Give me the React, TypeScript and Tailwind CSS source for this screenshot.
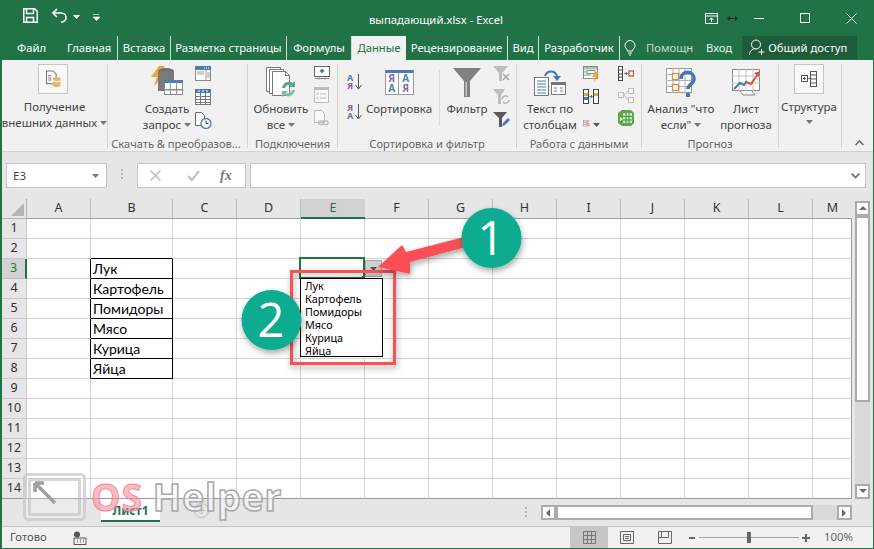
import React from 'react';

const UI = { fontFamily: '"Noto Sans", "Open Sans", sans-serif' };
const CELL = { fontFamily: 'Lato, "Noto Sans", sans-serif' };

const BLUE = '#4a7db5';
const LIGHT = '#bdbdbd';

const Caret = ({ color = '#777' }: { color?: string }) => (
  <svg width="7" height="4" viewBox="0 0 7 4" className="inline-block shrink-0">
    <path d="M0 0h7L3.5 4z" fill={color} />
  </svg>
);

const Table = ({ x, y, w, h, head = BLUE }: { x: number; y: number; w: number; h: number; head?: string }) => (
  <g>
    <rect x={x + 0.5} y={y + 0.5} width={w - 1} height={h - 1} fill="#fff" stroke="#8a8a8a" />
    <rect x={x} y={y} width={w} height={3} fill={head} />
    <path d={`M${x} ${y + (h + 3) / 2 + 0.5}h${w}M${x + w / 3} ${y}v${h}M${x + (2 * w) / 3} ${y}v${h}`} stroke="#8a8a8a" />
  </g>
);

const GetDataIcon = () => (
  <svg width="15" height="18" viewBox="0 0 14 16">
    <path d="M.5.5h6l3 3v9h-9z" fill="#fff" stroke="#777" />
    <path d="M2 5h3M2 7h3M2 9h3" stroke="#777" />
    <ellipse cx="10" cy="7.5" rx="3.5" ry="1.5" fill="#e7b76a" />
    <path d="M6.5 7.5h7V14c0 2-7 2-7 0z" fill="#e7b76a" />
    <path d="M6.5 9.5c1 1.5 6 1.5 7 0" stroke="#fff" fill="none" />
  </svg>
);

const QueryIcon = () => (
  <svg width="33" height="33" viewBox="0 0 33 33">
    <path d="M8 0h6l-4 8h5L3 20l3-9H0z" fill="#eea935" />
    <ellipse cx="15" cy="5" rx="8" ry="3" fill="#6e6e6e" />
    <path d="M7 5h16v20H7z" fill="#7a7a7a" />
    <Table x={13} y={14} w={19} h={15} />
    <path d="M13.5 24h19" stroke="#8a8a8a" />
  </svg>
);

const ShowQueriesIcon = () => (
  <svg width="16" height="16" viewBox="0 0 16 16">
    <rect x=".5" y=".5" width="15" height="14" fill="#fff" stroke="#8a8a8a" />
    <rect width="16" height="4" fill={BLUE} />
    <path d="M9 2h5" stroke="#fff" strokeDasharray="1 1" />
    <path d="M11 4v11M12 7h3M12 9h3M12 11h3M2 6h7M2 8h7" stroke="#9a9a9a" />
  </svg>
);

const FromTableIcon = () => (
  <svg width="16" height="16" viewBox="0 0 16 16">
    <rect x=".5" y=".5" width="15" height="15" fill="#fff" stroke="#777" />
    <rect width="16" height="4" fill={BLUE} />
    <path d="M3 2h2M7 2h2M11 2h2" stroke="#fff" />
    <path d="M0 7.5h16M0 10.5h16M0 13.5h16M5.5 4v12M10.5 4v12" stroke="#777" />
  </svg>
);

const RecentIcon = () => (
  <svg width="17" height="17" viewBox="0 0 17 17">
    <path d="M.5.5h6l3 3v10h-9z" fill="#fff" stroke="#666" />
    <circle cx="11" cy="11.5" r="5" fill="#fff" stroke={BLUE} strokeWidth="1.3" />
    <path d="M11 8.5v3h2.5" stroke="#333" fill="none" />
  </svg>
);

const RefreshIcon = () => (
  <svg width="31" height="31" viewBox="0 0 31 31">
    <path d="M.5.5h14v24H.5z" fill="#fff" stroke="#777" />
    <path d="M3.5 2.5h14v24h-14z" fill="#fff" stroke="#777" />
    <path d="M6.5 4.5h13l4 4v20h-17z" fill="#fff" stroke="#777" />
    <path d="M19.5 4.5v4h4" fill="none" stroke="#777" />
    <path d="M16 21a7 7 0 0 1 11-5l2-2v6h-6l2-2a4.5 4.5 0 0 0-6 3z" fill="#54a88a" />
    <path d="M29 23a7 7 0 0 1-11 5l-2 2v-6h6l-2 2a4.5 4.5 0 0 0 6-3z" fill="#7fc0a8" />
  </svg>
);

const ConnectionsIcon = () => (
  <svg width="16" height="14" viewBox="0 0 16 14">
    <rect x=".5" y=".5" width="15" height="10" fill="#fff" stroke="#666" />
    <path d="M8 2.5l2.5 2.5L8 7.5 5.5 5z" fill={BLUE} />
    <path d="M1 12.5h14" stroke="#888" />
    <path d="M5 11v3M11 11v3" stroke="#aaa" />
  </svg>
);

const PropsIcon = () => (
  <svg width="15" height="16" viewBox="0 0 15 16">
    <rect x=".5" y=".5" width="14" height="15" fill="#f8f8f8" stroke={LIGHT} />
    <rect width="15" height="3" fill={LIGHT} />
    <path d="M6 7h6M6 11h6" stroke={LIGHT} />
    <circle cx="3.5" cy="7" r="1" fill={LIGHT} />
    <circle cx="3.5" cy="11" r="1" fill={LIGHT} />
  </svg>
);

const LinksIcon = () => (
  <svg width="15" height="16" viewBox="0 0 15 16">
    <path d="M.5.5h7l3 3v9h-10z" fill="#f8f8f8" stroke={LIGHT} />
    <rect x="4.5" y="11" width="5" height="3.5" rx="1.7" fill="none" stroke={LIGHT} strokeWidth="1.4" />
    <rect x="8.5" y="11" width="5.5" height="3.5" rx="1.7" fill="none" stroke={LIGHT} strokeWidth="1.4" />
  </svg>
);

const SortSmall = ({ top, bottom, topColor, bottomColor }: { top: string; bottom: string; topColor: string; bottomColor: string }) => (
  <div className="flex h-[16px] w-[15px] items-center">
    <div className="flex w-[8px] flex-col text-[9px] font-bold leading-[8px]">
      <span style={{ color: topColor }}>{top}</span>
      <span style={{ color: bottomColor }}>{bottom}</span>
    </div>
    <svg width="7" height="16" viewBox="0 0 7 16">
      <path d="M3.5 0v14M.5 11l3 4 3-4" fill="none" stroke="#555" />
    </svg>
  </div>
);

const SortCell = ({ children, color }: { children: string; color: string }) => (
  <span className="flex h-[10px] items-center justify-center text-[10px] font-bold" style={{ color }}>
    {children}
  </span>
);

const SortBigIcon = () => (
  <div className="flex h-[25px] w-[29px] flex-col border border-[#999] border-t-[3px] border-t-[#4a7db5] bg-white">
    <div className="grid flex-1 grid-cols-2 divide-x divide-[#999]">
      <div>
        <SortCell color="#8b5fae">Я</SortCell>
        <SortCell color="#4a7db5">А</SortCell>
      </div>
      <div>
        <SortCell color="#4a7db5">А</SortCell>
        <SortCell color="#8b5fae">Я</SortCell>
      </div>
    </div>
  </div>
);

const FilterBigIcon = () => (
  <svg width="28" height="29" viewBox="0 0 28 29">
    <path d="M0 0h28L17 13v16h-6V13z" fill="#808080" />
    <path d="M12.5 14v14h1.5V14z" fill="#c8c8c8" />
  </svg>
);

const ClearFilterIcon = () => (
  <svg width="17" height="16" viewBox="0 0 17 16">
    <path d="M0 0h15L9 7v8H6V7z" fill={LIGHT} />
    <path d="M10 8l6 6M16 8l-6 6" stroke="#a8a8a8" strokeWidth="1.5" />
  </svg>
);

const ReapplyIcon = () => (
  <svg width="17" height="16" viewBox="0 0 17 16">
    <path d="M0 0h12L8 6v9H5V6z" fill={LIGHT} />
    <path d="M9 10a3.5 3.5 0 0 1 6-2M16 11a3.5 3.5 0 0 1-6 2" fill="none" stroke="#aaa" strokeWidth="1.3" />
  </svg>
);

const AdvancedIcon = () => (
  <svg width="17" height="16" viewBox="0 0 17 16">
    <path d="M0 0h14L9 6v9H6V6z" fill="#5a5a5a" />
    <path d="M9 14l1-3 5-5 2 2-5 5z" fill="#3f78c0" />
  </svg>
);

const TextColumnsIcon = () => (
  <svg width="32" height="26" viewBox="0 0 32 26">
    <rect x=".5" y="7.5" width="14" height="18" fill="#fff" stroke="#777" />
    <path d="M3 11h9M3 14h9M3 17h9M3 20h9M3 23h9" stroke={BLUE} />
    <path d="M11 6c2-6 10-6 12 0" fill="none" stroke="#3f78b5" strokeWidth="2" />
    <path d="M19 6h8l-4 5z" fill="#3f78b5" />
    <rect x="17.5" y="12.5" width="14" height="12" fill="#fff" stroke="#777" />
    <rect x="17" y="12" width="15" height="3" fill="#767676" />
    <path d="M20 18h3M26 18h3M20 21h3M26 21h3" stroke={BLUE} />
  </svg>
);

const FlashFillIcon = () => (
  <svg width="17" height="16" viewBox="0 0 17 16">
    <rect x=".5" y=".5" width="14" height="12" fill="#fff" stroke="#8a8a8a" />
    <rect x="1" y="1" width="13" height="2.5" fill="#a8c4a8" />
    <path d="M1 6h9M1 9h7" stroke="#8a8a8a" />
    <rect x="4" y="4.5" width="8" height="3" fill="#fff" stroke="#6aa06a" />
    <path d="M12 6h4l-2 3h2l-5 7 1-5H9z" fill="#eea935" />
  </svg>
);

const RemoveDupIcon = () => (
  <svg width="16" height="15" viewBox="0 0 16 15">
    <rect x=".5" y=".5" width="5" height="14" fill="#fff" stroke="#444" />
    <rect x="1" y="4" width="4" height="3" fill="#e0a94a" />
    <rect x="1" y="8" width="4" height="3" fill="#4a7db5" />
    <rect x="10.5" y=".5" width="5" height="14" fill="#fff" stroke="#444" />
    <rect x="11" y="4" width="4" height="3" fill="#e0a94a" />
    <path d="M6.5 7.5h3M8 6l1.5 1.5L8 9" fill="none" stroke="#3f78b5" />
  </svg>
);

const ValidationIcon = () => (
  <svg width="17" height="16" viewBox="0 0 17 16">
    <rect x=".5" y="2.5" width="10" height="3" fill="#fff" stroke="#777" />
    <rect x=".5" y="7.5" width="10" height="3" fill="#fff" stroke="#777" />
    <rect x=".5" y="12.5" width="8" height="3" fill="#fff" stroke="#777" />
    <path d="M9 3l2.5 2.5L16 0" fill="none" stroke="#5a9f7c" strokeWidth="1.5" />
    <circle cx="12" cy="12" r="3.5" fill="#fff" stroke="#d83b3b" strokeWidth="1.3" />
    <path d="M9.5 9.5l5 5" stroke="#d83b3b" strokeWidth="1.3" />
  </svg>
);

const ConsolidateIcon = () => (
  <svg width="16" height="15" viewBox="0 0 16 15">
    <rect x=".5" y=".5" width="4" height="14" fill="#fff" stroke="#444" />
    <path d="M1 4h3M1 8h3M1 11h3" stroke="#444" />
    <path d="M6 7.5h3M8 6l1.5 1.5L8 9" fill="none" stroke="#3f78b5" />
    <rect x="11" y="5" width="4.5" height="5" fill="#fff" stroke="#d0543a" strokeWidth="1.3" />
  </svg>
);

const RelationsIcon = () => (
  <svg width="16" height="15" viewBox="0 0 16 15">
    <g fill="#f6f6f6" stroke={LIGHT}>
      <rect x=".5" y="4.5" width="5" height="5" />
      <rect x="10.5" y=".5" width="5" height="5" />
      <rect x="10.5" y="9.5" width="5" height="5" />
    </g>
    <path d="M6 7l4-4M6 7l4 5" stroke={LIGHT} />
  </svg>
);

const DataModelIcon = () => (
  <svg width="16" height="16" viewBox="0 0 16 16">
    <path d="M4 0h9l3 3v10l-3 3H4l-4-3V3z" fill="#5aa845" />
    <path d="M5 3h9v10H5z" fill="#c9e6bd" />
    <path d="M8 3v10M11 3v10M5 6.5h9M5 10h9" stroke="#3f8f3f" />
    <path d="M2 7l3 2-3 2z" fill="#fff" />
  </svg>
);

const WhatIfIcon = () => (
  <svg width="30" height="30" viewBox="0 0 30 30">
    <rect x=".5" y=".5" width="25" height="24" fill="#fff" stroke="#999" />
    <path d="M7 0v25M13 0v25M19 0v25M0 6.5h25M0 12.5h25M0 18.5h25" stroke="#b0b0b0" />
    <rect x="6.5" y="5.5" width="6" height="6" fill="#fff" stroke="#e08a3c" strokeWidth="1.3" />
    <rect x="6.5" y="16.5" width="6" height="6" fill="#fff" stroke="#e08a3c" strokeWidth="1.3" />
    <path d="M15 11c0-9 13-9 13 0 0 5-6 5-6 10" fill="none" stroke="#3f78b5" strokeWidth="3.5" />
    <rect x="20" y="25" width="4" height="4" fill="#3f78b5" />
  </svg>
);

const ForecastIcon = () => (
  <svg width="29" height="27" viewBox="0 0 29 27">
    <rect x=".5" y=".5" width="27" height="21" fill="#fff" stroke="#8a8a8a" />
    <path d="M7 0v22M14 0v22M21 0v22M0 7h28M0 14h28" stroke="#c4c4c4" />
    <path d="M2 20l6-6 4 2 3-4" fill="none" stroke="#3f78b5" strokeWidth="2" />
    <path d="M14 13l5 2 7-10" fill="none" stroke="#d8553c" strokeWidth="2" />
    <path d="M22 4l6-2-1 6z" fill="#d8553c" />
    <path d="M8 22l3 4h12l-3-4" fill="#f4f4f4" stroke="#8a8a8a" />
  </svg>
);

const OutlineIcon = () => (
  <svg width="16" height="16" viewBox="0 0 16 16">
    <rect x=".5" y="4.5" width="6" height="6" fill="#fff" stroke="#555" />
    <path d="M2 7.5h3M3.5 6v3" stroke="#555" />
    <path d="M7 7.5h2" stroke="#4a7db5" />
    <rect x="9.5" y=".5" width="6" height="15" fill="#fff" stroke="#555" />
    <path d="M9.5 4h6M9.5 8h6M9.5 12h6" stroke="#555" />
  </svg>
);

type BigProps = {
  width: number;
  icon: React.ReactNode;
  lines: string[];
  caret?: boolean;
  tile?: boolean;
  tileClass?: string;
  className?: string;
};

function Big({ width, icon, lines, caret, tile, tileClass = '', className = '' }: BigProps) {
  return (
    <div className={`flex shrink-0 flex-col items-center ${className}`} style={{ width }}>
      {tile ? (
        <div className={`mb-[5px] flex h-[30px] w-[30px] items-center justify-center border border-[#c6c6c6] bg-[#f8f8f8] ${tileClass}`}>{icon}</div>
      ) : (
        <div className="flex h-[37px] items-center justify-center">{icon}</div>
      )}
      {lines.map((line, i) => (
        <div key={i} className="flex h-[16px] items-center gap-[3px] whitespace-nowrap text-[11.5px] leading-[16px] text-[#444]">
          {line}
          {caret && i === lines.length - 1 && <Caret />}
        </div>
      ))}
    </div>
  );
}

function Group({ width, label, labelClass = '', children }: { width: number; label: string; labelClass?: string; children: React.ReactNode }) {
  return (
    <div className="flex h-[84px] shrink-0 flex-col border-r border-[#d4d4d4]" style={{ width }}>
      <div className="flex h-[72px]">{children}</div>
      <div className={`h-[12px] whitespace-nowrap text-center text-[11.1px] leading-[16px] text-[#666] ${labelClass}`}>{label}</div>
    </div>
  );
}

function SmallCol({ children, className = '' }: { children: React.ReactNode; className?: string }) {
  return <div className={`flex shrink-0 flex-col gap-[7px] pt-[2px] ${className}`}>{children}</div>;
}

const tabs = [
  { name: 'Файл', w: 'w-[59px]' },
  { name: 'Главная', w: 'w-[57px] border-r border-[#cfe0d6]' },
  { name: 'Вставка', w: 'w-[53px] border-r border-[#cfe0d6]' },
  { name: 'Разметка страницы', w: 'w-[116px] border-r border-[#cfe0d6]' },
  { name: 'Формулы', w: 'w-[65px] border-r border-[#cfe0d6]' },
  { name: 'Данные', w: 'w-[54px] bg-[#f1f1f1] !text-[#217346]' },
  { name: 'Рецензирование', w: 'w-[102px] border-r border-[#cfe0d6]' },
  { name: 'Вид', w: 'w-[31px] border-r border-[#cfe0d6]' },
  { name: 'Разработчик', w: 'w-[81px] border-r border-[#cfe0d6]' },
];

const colNames = ['A', 'B', 'C', 'D', 'E', 'F', 'G', 'H', 'I', 'J', 'K', 'L', 'M'];
const rowNums = Array.from({ length: 14 }, (_, i) => i + 1);
const items = ['Лук', 'Картофель', 'Помидоры', 'Мясо', 'Курица', 'Яйца'];

function SheetCell({ row, col }: { row: number; col: string }) {
  const boxed = row >= 3 && row <= 8;
  const selected = col === 'E' && row === 3;
  let cls = 'border-r border-b border-[#d4d4d4]';
  if (col === 'A' && boxed) cls = 'border-r border-b border-b-[#d4d4d4] border-r-black';
  if (col === 'B' && row === 2) cls = 'border-r border-b border-r-[#d4d4d4] border-b-black';
  if (col === 'B' && boxed) cls = 'border-r border-b border-black';
  if (col === 'M') cls = 'border-r border-b border-b-[#d4d4d4] border-r-[#9a9a9a]';
  if (row === 14) cls += ' !border-b-[#9a9a9a]';
  return (
    <div className={`relative flex items-end bg-white pl-[2px] text-[14px] leading-[18px] text-black ${cls} ${selected ? 'z-10' : ''}`} style={CELL}>
      {col === 'B' && boxed ? items[row - 3] : ''}
      {selected && (
        <>
          <div className="absolute -left-[2px] -top-[2px] h-[22px] w-[66px] border-2 border-[#217346]" />
          <div className="absolute -bottom-[1px] -right-[1px] z-10 h-[3px] w-[3px] bg-[#217346]" />
          <div className="absolute -right-[18px] top-[1px] flex h-[17px] w-[17px] items-center justify-center border border-[#a8a8a8] bg-[#d0d0d0]">
            <Caret color="#555" />
          </div>
          <div className="absolute -left-[1px] top-[19px] z-10 flex h-[79px] w-[83px] flex-col border border-black bg-white pl-[4px] leading-[13px]" style={UI}>
            {items.map(item => (
              <span key={item} className="text-[10.8px]">{item}</span>
            ))}
          </div>
        </>
      )}
    </div>
  );
}

function ScrollButton({ dir, className = '' }: { dir: 'up' | 'down' | 'left' | 'right'; className?: string }) {
  const d = { up: 'M4 0l4 4H0z', down: 'M0 0h8L4 4z', left: 'M4 0v8L0 4z', right: 'M0 0v8l4-4z' }[dir];
  return (
    <div className={`flex shrink-0 items-center justify-center border-2 border-[#ababab] bg-white ${className}`}>
      <svg width="8" height="8" viewBox="0 0 8 8" className={dir === 'up' || dir === 'down' ? 'mt-[3px]' : 'ml-[3px]'}>
        <path d={d} fill="#6a6a6a" />
      </svg>
    </div>
  );
}

function Annotations() {
  return (
    <svg width="874" height="549" viewBox="0 0 874 549" className="pointer-events-none absolute -left-[2px] top-0 z-20">
      <defs>
        <filter id="soft" x="-30%" y="-30%" width="160%" height="160%">
          <feDropShadow dx="1" dy="3" stdDeviation="3" floodColor="#000" floodOpacity="0.35" />
        </filter>
      </defs>
      <rect x="291.5" y="271.5" width="103" height="92" fill="none" stroke="#fb4f55" strokeWidth="3" filter="url(#soft)" />
      <path d="M378 267l24-22 4 7 58-15 2 10-56 15 0 12z" fill="#fb4f55" filter="url(#soft)" />
      <circle cx="491.5" cy="238" r="30" fill="#0aab8f" filter="url(#soft)" />
      <circle cx="271.5" cy="320" r="30" fill="#0aab8f" filter="url(#soft)" />
      <text x="491" y="255" textAnchor="middle" fontSize="47" fill="#fff" fontFamily="Open Sans, sans-serif">1</text>
      <text x="271" y="337" textAnchor="middle" fontSize="47" fill="#fff" fontFamily="Open Sans, sans-serif">2</text>
    </svg>
  );
}

function Watermark() {
  return (
    <div className="pointer-events-none absolute left-[21px] top-[473px] z-20 flex items-start">
      <div className="relative h-[48px] w-[63px] rounded-[5px] border-[3px] border-[#c4c4c4]/70 bg-white/20">
        <div className="absolute inset-[2px] rounded-[3px] border-[3px] border-[#bdbdbd]/60" />
        <svg width="30" height="28" viewBox="0 0 30 28" className="absolute left-[6px] top-[4px]">
          <path d="M3 3l20 20M3 3v9M3 3h9" fill="none" stroke="#a0a0a0" strokeWidth="3.5" />
        </svg>
      </div>
      <div className="ml-[5px] mt-[5px] flex text-[37px] font-bold leading-[38px] tracking-[1px]" style={{ fontFamily: '"Open Sans", sans-serif' }}>
        <span className="text-[#ff8f9f]/60 [-webkit-text-stroke:1px_#f08a9a]">OS</span>
        <span className="ml-[10px] text-white/50 [-webkit-text-stroke:1.5px_#a8a8a8]">Helper</span>
      </div>
    </div>
  );
}

export default function App() {
  return (
    <div className="relative flex h-[549px] w-[874px] flex-col overflow-hidden border-b border-l-2 border-r border-[#217346] bg-[#e6e6e6]" style={UI}>
      {/* title bar */}
      <div className="relative flex h-[36px] shrink-0 items-center bg-[#217346] text-white">
        <svg width="15" height="15" viewBox="0 0 15 15" className="ml-[21px] mt-[-6px]">
          <path d="M.75.75h11l2.5 2.5v11H.75z" fill="none" stroke="#fff" strokeWidth="1.5" />
          <path d="M3.5 1v4.5h7V1M3.5 14V9.5h7V14" fill="none" stroke="#fff" strokeWidth="1.5" />
        </svg>
        <svg width="15" height="15" viewBox="0 0 15 15" className="ml-[14px] mt-[-6px]">
          <path d="M5 1L1 5l4 4M1 5h8c3 0 5 2 5 4.5S12 14 9 14" fill="none" stroke="#fff" strokeWidth="1.6" />
        </svg>
        <span className="ml-[6px] mt-[-6px]"><Caret color="#fff" /></span>
        <svg width="7" height="7" viewBox="0 0 7 7" className="ml-[13px] mt-[-2px]">
          <path d="M0 .5h6M0 3h7L3.5 6.5z" fill="#fff" stroke="#fff" strokeWidth=".6" />
        </svg>
        <span className="absolute left-[367px] top-[11px] whitespace-nowrap text-[11.3px] leading-[18px]">выпадающий.xlsx - Excel</span>
        <div className="ml-auto flex items-center pr-[16px]">
          <svg width="13" height="11" viewBox="0 0 13 11" className="mr-[9px]">
            <path d="M.5.5h12v10H.5zM0 3h13M6.5 9V5M4.5 7l2-2 2 2" fill="none" stroke="#fff" />
          </svg>
          <svg width="11" height="7" viewBox="0 0 11 7" className="mr-[16px]">
            <path d="M0 3.5L3 1v5zM11 3.5L8 1v5zM3 3h5v1H3z" fill="#1b2a22" />
          </svg>
          <div className="mr-[36px] h-px w-[10px] bg-white" />
          <div className="mr-[36px] h-[10px] w-[10px] border border-white" />
          <svg width="11" height="11" viewBox="0 0 11 11">
            <path d="M.5.5l10 10M10.5.5l-10 10" stroke="#fff" />
          </svg>
        </div>
      </div>

      {/* tabs */}
      <div className="flex h-[24px] shrink-0 bg-[#217346] text-[11.25px] leading-[24px] text-white">
        {tabs.map(t => (
          <div key={t.name} className={`whitespace-nowrap text-center ${t.w}`}>{t.name}</div>
        ))}
        <svg width="12" height="16" viewBox="0 0 12 16" className="ml-[4px] mt-[4px]">
          <path d="M3.5 11C3 8.5 1 8 1 5.5a5 5 0 0 1 10 0C11 8 9 8.5 8.5 11zM4 13h4M5 15h2" fill="none" stroke="#fff" />
        </svg>
        <div className="ml-[10px] w-[47px] overflow-hidden whitespace-nowrap text-[#c5dccf]">Помощн</div>
        <div className="ml-[13px] text-[#e8f1ec]">Вход</div>
        <div className="ml-[10px] flex h-[23px] w-[115px] items-center bg-[#1d5b3a] pl-[7px]">
          <svg width="17" height="17" viewBox="0 0 17 17">
            <circle cx="7" cy="5.5" r="4.5" fill="none" stroke="#fff" />
            <path d="M.5 16c0-4 3-6.5 6.5-6.5M12.5 10v6M9.5 13h6" fill="none" stroke="#fff" />
          </svg>
          <span className="ml-[2px] whitespace-nowrap leading-[23px]">Общий доступ</span>
        </div>
      </div>

      {/* ribbon */}
      <div className="flex h-[92px] shrink-0 border-b border-[#d2d2d2] bg-[#f1f1f1] pt-[4px]">
        <Group width={106} label="">
          <Big width={105} tile tileClass="mr-[3px]" icon={<GetDataIcon />} lines={['Получение', 'внешних данных']} caret />
        </Group>
        <Group width={140} label="Скачать & преобразов..." labelClass="pr-[3px]">
          <Big width={56} className="ml-[31px]" icon={<QueryIcon />} lines={['Создать', 'запрос']} caret />
          <SmallCol>
            <ShowQueriesIcon />
            <FromTableIcon />
            <RecentIcon />
          </SmallCol>
        </Group>
        <Group width={90} label="Подключения">
          <Big width={60} className="ml-[3px]" icon={<RefreshIcon />} lines={['Обновить', 'все']} caret />
          <SmallCol className="ml-[3px]">
            <ConnectionsIcon />
            <PropsIcon />
            <LinksIcon />
          </SmallCol>
        </Group>
        <Group width={179} label="Сортировка и фильтр">
          <div className="ml-[9px] flex w-[15px] shrink-0 flex-col gap-[14px] pt-[10px]">
            <SortSmall top="А" bottom="Я" topColor="#4a7db5" bottomColor="#8b5fae" />
            <SortSmall top="Я" bottom="А" topColor="#8b5fae" bottomColor="#4a7db5" />
          </div>
          <Big width={72} className="ml-[1px]" icon={<SortBigIcon />} lines={['Сортировка']} />
          <div className="ml-[4px] mt-[6px] h-[56px] w-px bg-[#dcdcdc]" />
          <Big width={44} className="ml-[5px]" icon={<FilterBigIcon />} lines={['Фильтр']} />
          <SmallCol className="ml-[4px]">
            <ClearFilterIcon />
            <ReapplyIcon />
            <AdvancedIcon />
          </SmallCol>
        </Group>
        <Group width={125} label="Работа с данными">
          <Big width={62} className="ml-[2px]" icon={<TextColumnsIcon />} lines={['Текст по', 'столбцам']} />
          <SmallCol className="ml-[2px]">
            <FlashFillIcon />
            <RemoveDupIcon />
            <div className="flex w-[17px] items-center gap-[3px]">
              <ValidationIcon />
              <span className="shrink-0"><Caret color="#555" /></span>
            </div>
          </SmallCol>
          <SmallCol className="ml-[18px]">
            <ConsolidateIcon />
            <RelationsIcon />
            <DataModelIcon />
          </SmallCol>
        </Group>
        <Group width={137} label="Прогноз">
          <Big width={74} className="ml-[2px]" icon={<WhatIfIcon />} lines={['Анализ "что', 'если"']} caret />
          <Big width={56} icon={<ForecastIcon />} lines={['Лист', 'прогноза']} />
        </Group>
        <Group width={63} label="">
          <div className="flex flex-col items-center">
            <Big width={60} tile icon={<OutlineIcon />} lines={['Структура']} />
            <div className="mt-[5px] flex"><Caret /></div>
          </div>
        </Group>
        <div className="flex flex-1 items-end justify-center pb-[5px] pl-[3px]">
          <svg width="9" height="6" viewBox="0 0 9 6">
            <path d="M.5 5l4-4 4 4" fill="none" stroke="#666" strokeWidth="1.5" />
          </svg>
        </div>
      </div>

      {/* formula bar */}
      <div className="flex h-[47px] shrink-0 items-start pl-[4px] pt-[11px]">
        <div className="flex h-[25px] w-[101px] items-center justify-between border border-[#c6c6c6] bg-white pl-[6px] pr-[7px] text-[11.5px] text-[#444]">
          E3
          <Caret color="#777" />
        </div>
        <div className="ml-[14px] mt-[6px] flex flex-col gap-[2px]">
          <div className="h-[2px] w-[2px] bg-[#b4b4b4]" />
          <div className="h-[2px] w-[2px] bg-[#b4b4b4]" />
          <div className="h-[2px] w-[2px] bg-[#b4b4b4]" />
        </div>
        <div className="ml-[14px] flex h-[25px] w-[109px] items-center border border-[#c6c6c6] bg-white pl-[12px]">
          <svg width="11" height="11" viewBox="0 0 11 11">
            <path d="M.5.5l10 10M10.5.5l-10 10" stroke="#bcbcbc" strokeWidth="1.4" />
          </svg>
          <svg width="13" height="11" viewBox="0 0 13 11" className="ml-[26px]">
            <path d="M1 6l4 4 7-9" fill="none" stroke="#bcbcbc" strokeWidth="2" />
          </svg>
          <span className="ml-[20px] text-[14px] font-bold italic text-[#777]" style={{ fontFamily: '"Liberation Serif", serif' }}>fx</span>
        </div>
        <div className="ml-[4px] flex h-[25px] w-[616px] items-center justify-end border border-[#c6c6c6] bg-white pr-[5px]">
          <svg width="9" height="6" viewBox="0 0 9 6">
            <path d="M.5.5l4 4 4-4" fill="none" stroke="#777" strokeWidth="1.8" />
          </svg>
        </div>
      </div>

      {/* sheet */}
      <div className="flex h-[300px] shrink-0">
        <div className="grid grid-cols-[25px_64px_82px_64px_64px_64px_64px_64px_64px_64px_64px_64px_64px_39px] grid-rows-[repeat(15,20px)]">
          <div className="flex items-end justify-end border-b border-r border-[#b4b4b4] p-[2px]">
            <svg width="13" height="13" viewBox="0 0 13 13">
              <path d="M13 0v13H0z" fill="#b4b4b4" />
            </svg>
          </div>
          {colNames.map(c => (
            <div
              key={c}
              className={
                c === 'E'
                  ? 'flex items-center justify-center border-b-2 border-[#217346] bg-[#d2d2d2] text-[12.5px] text-[#217346]'
                  : `flex items-center justify-center border-b border-[#9f9f9f] text-[12.5px] text-[#333] ${c === 'M' ? '' : 'border-r border-r-[#bdbdbd]'}`
              }
            >
              {c}
            </div>
          ))}
          {rowNums.map(r => (
            <React.Fragment key={r}>
              <div
                className={
                  r === 3
                    ? 'flex items-center justify-center border-b border-r-2 border-b-[#bdbdbd] border-r-[#217346] bg-[#d2d2d2] text-[12.5px] text-[#217346]'
                    : `flex items-center justify-center border-b border-r border-[#c8c8c8] text-[12.5px] text-[#333] ${r === 14 ? 'border-b-[#9a9a9a]' : ''}`
                }
              >
                {r}
              </div>
              {colNames.map(c => (
                <SheetCell key={c} row={r} col={c} />
              ))}
            </React.Fragment>
          ))}
        </div>
        <div className="ml-[3px] flex w-[15px] shrink-0 flex-col pt-[2px]">
          <ScrollButton dir="up" className="h-[15px] w-[15px]" />
          <div className="h-[186px] border-2 border-[#ababab] bg-white" />
          <div className="h-[82px] bg-[#d9d9d9]" />
          <ScrollButton dir="down" className="h-[15px] w-[15px]" />
        </div>
      </div>

      {/* sheet tabs */}
      <div className="flex h-[28px] shrink-0 border-b border-[#c6c6c6]">
        <div className="ml-[99px] h-[23px] w-[59px] border-b-2 border-[#217346] bg-white text-center text-[12px] font-bold leading-[24px] text-[#217346]">Лист1</div>
        <div className="ml-[34px] mt-[4px] flex h-[15px] w-[15px] items-center justify-center rounded-full border border-[#c0c0c0] text-[13px] leading-none text-[#b4b4b4]">+</div>
        <div className="ml-[316px] mt-[8px] flex flex-col gap-[2px]">
          <div className="h-[2px] w-[2px] bg-[#b4b4b4]" />
          <div className="h-[2px] w-[2px] bg-[#b4b4b4]" />
          <div className="h-[2px] w-[2px] bg-[#b4b4b4]" />
        </div>
        <div className="ml-[14px] mt-[6px] flex h-[15px]">
          <ScrollButton dir="left" className="h-[15px] w-[15px]" />
          <div className="h-[15px] w-[257px] border-2 border-[#ababab] bg-white" />
          <div className="h-[15px] w-[24px] bg-[#d9d9d9]" />
          <ScrollButton dir="right" className="h-[15px] w-[15px]" />
        </div>
      </div>

      {/* status bar */}
      <div className="flex h-[21px] shrink-0 items-center bg-[#f1f1f1] text-[11.3px] text-[#555]">
        <span className="ml-[8px] w-[36px] whitespace-nowrap">Готово</span>
        <svg width="14" height="14" viewBox="0 0 14 14" className="ml-[27px]">
          <circle cx="4" cy="3.5" r="3" fill="#555" />
          <path d="M1 7h12v6.5H1zM4 9h1M7 9h1M10 9h1M4 11h1M7 11h1M10 11h1" fill="none" stroke="#555" />
        </svg>
        <div className="ml-[483px] flex h-[21px] w-[38px] items-center justify-center bg-[#c6c6c6]">
          <svg width="13" height="13" viewBox="0 0 13 13">
            <path d="M.5.5h12v12H.5zM4.5 0v13M8.5 0v13M0 4.5h13M0 8.5h13" fill="none" stroke="#777" />
          </svg>
        </div>
        <svg width="14" height="13" viewBox="0 0 14 13" className="ml-[12px]">
          <path d="M.5.5h13v12H.5zM3.5 3.5h7v6h-7zM5 5.5h4M5 7.5h4" fill="none" stroke="#666" />
        </svg>
        <svg width="14" height="13" viewBox="0 0 14 13" className="ml-[24px]">
          <path d="M.5.5h13v12H.5zM3.5.5v6h7v-6M.5 6.5h3" fill="none" stroke="#666" />
        </svg>
        <div className="ml-[17px] h-[2px] w-[6px] bg-[#666]" />
        <div className="relative ml-[4px] h-px w-[100px] bg-[#a0a0a0]">
          <div className="absolute left-[48px] top-[-5px] h-[11px] w-[4px] bg-[#666]" />
        </div>
        <svg width="8" height="8" viewBox="0 0 8 8" className="ml-[3px]">
          <path d="M4 0v8M0 4h8" stroke="#666" strokeWidth="2" />
        </svg>
        <span className="ml-[14px] text-[#666]">100%</span>
      </div>

      <Annotations />
      <Watermark />
    </div>
  );
}
